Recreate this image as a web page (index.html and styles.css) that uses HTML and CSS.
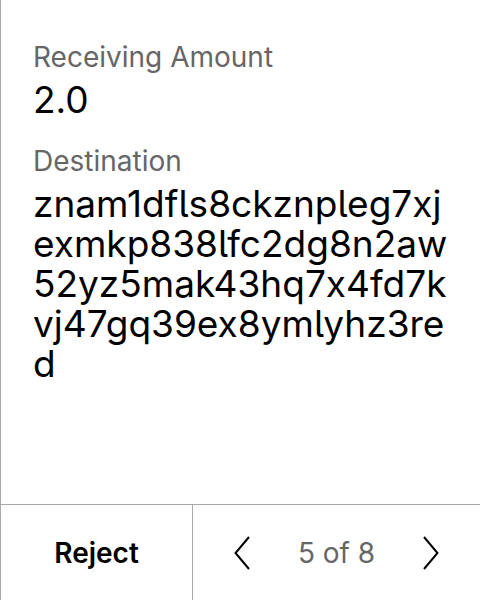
FILE: index.html
```html
<!DOCTYPE html>
<html>
<head>
<meta charset="utf-8">
<link rel="stylesheet" href="styles.css">
</head>
<body>
<div class="screen">
  <div class="content">
    <div class="field">
      <div class="label">Receiving Amount</div>
      <div class="value">2.0</div>
    </div>
    <div class="field">
      <div class="label">Destination</div>
      <div class="value address">znam1dfls8ckznpleg7xjexmkp838lfc2dg8n2aw52yz5mak43hq7x4fd7kvj47gq39ex8ymlyhz3red</div>
    </div>
  </div>
  <div class="footer">
    <div class="reject">Reject</div>
    <div class="pager">
      <svg class="chev" width="16" height="34" viewBox="0 0 16 34"><path d="M15 1 L1.5 17 L15 33" fill="none" stroke="#000" stroke-width="2"/></svg>
      <span class="count">5 of 8</span>
      <svg class="chev" width="16" height="34" viewBox="0 0 16 34"><path d="M1 1 L14.5 17 L1 33" fill="none" stroke="#000" stroke-width="2"/></svg>
    </div>
  </div>
</div>
</body>
</html>
```
FILE: styles.css
```css
html, body {
  margin: 0;
  padding: 0;
  background: #fff;
}
body {
  font-family: Inter, "Noto Sans", sans-serif;
  font-feature-settings: "calt" 0, "cv05" 1;
  color: #000;
}
.screen {
  width: 480px;
  height: 600px;
  display: flex;
  flex-direction: column;
  border-left: 1px solid #aaa;
  box-sizing: border-box;
}
.content {
  flex: 1;
  padding: 39px 30px 0 32px;
  display: flex;
  flex-direction: column;
  gap: 23px;
}
.label {
  font-size: 28px;
  line-height: 36px;
  color: #666;
  margin-bottom: 5px;
}
.value {
  font-size: 37px;
  line-height: 40px;
  font-weight: 400;
}
.address {
  word-break: break-all;
}
.footer {
  height: 96px;
  box-sizing: border-box;
  border-top: 1px solid #aaa;
  display: flex;
}
.reject {
  width: 191px;
  border-right: 1px solid #aaa;
  display: flex;
  align-items: center;
  justify-content: center;
  font-size: 28px;
  font-weight: 600;
}
.pager {
  flex: 1;
  display: flex;
  align-items: center;
  justify-content: center;
  gap: 48px;
}
.count {
  font-size: 28px;
  color: #666;
}
```
